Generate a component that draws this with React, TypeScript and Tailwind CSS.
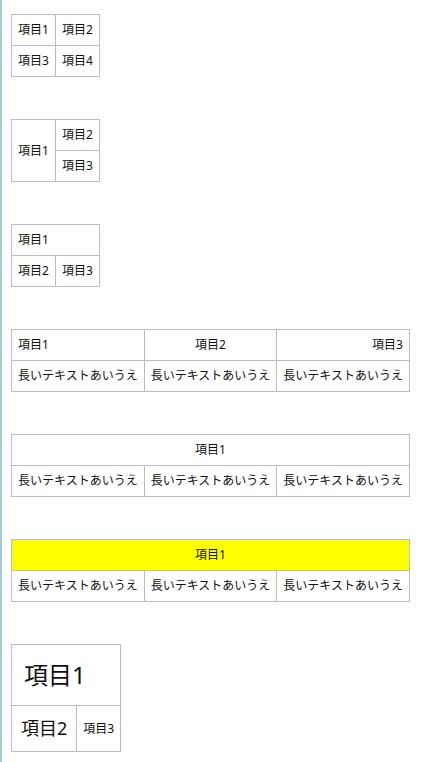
const td = 'border border-[#bdbdbd] p-[0.5em] leading-[1.5] whitespace-nowrap';
const longText = '長いテキストあいうえ';

const App = () => {
  return (
    <div
      className="min-h-[762px] border-l-2 border-[#a7c9d0] bg-white pl-[9px] pt-[14px] text-[12px] text-[#111]"
      style={{ fontFamily: '"Noto Sans", "Noto Sans CJK JP", sans-serif' }}
    >
      <div className="flex flex-col items-start gap-[42px]">
        <table className="border-collapse">
          <tbody>
            <tr>
              <td className={td}>項目1</td>
              <td className={td}>項目2</td>
            </tr>
            <tr>
              <td className={td}>項目3</td>
              <td className={td}>項目4</td>
            </tr>
          </tbody>
        </table>

        <table className="border-collapse">
          <tbody>
            <tr>
              <td className={td} rowSpan={2}>
                項目1
              </td>
              <td className={td}>項目2</td>
            </tr>
            <tr>
              <td className={td}>項目3</td>
            </tr>
          </tbody>
        </table>

        <table className="border-collapse">
          <tbody>
            <tr>
              <td className={td} colSpan={2}>
                項目1
              </td>
            </tr>
            <tr>
              <td className={td}>項目2</td>
              <td className={td}>項目3</td>
            </tr>
          </tbody>
        </table>

        <table className="border-collapse">
          <tbody>
            <tr>
              <td className={`${td} text-left`}>項目1</td>
              <td className={`${td} text-center`}>項目2</td>
              <td className={`${td} text-right`}>項目3</td>
            </tr>
            <tr>
              <td className={td}>{longText}</td>
              <td className={td}>{longText}</td>
              <td className={td}>{longText}</td>
            </tr>
          </tbody>
        </table>

        <table className="border-collapse">
          <tbody>
            <tr>
              <td className={`${td} text-center`} colSpan={3}>
                項目1
              </td>
            </tr>
            <tr>
              <td className={td}>{longText}</td>
              <td className={td}>{longText}</td>
              <td className={td}>{longText}</td>
            </tr>
          </tbody>
        </table>

        <table className="border-collapse">
          <tbody>
            <tr>
              <td className={`${td} bg-[#ffff00] text-center`} colSpan={3}>
                項目1
              </td>
            </tr>
            <tr>
              <td className={td}>{longText}</td>
              <td className={td}>{longText}</td>
              <td className={td}>{longText}</td>
            </tr>
          </tbody>
        </table>

        <table className="border-collapse">
          <tbody>
            <tr>
              <td className={`${td} text-[24px]`} colSpan={2}>
                項目1
              </td>
            </tr>
            <tr>
              <td className={`${td} text-[18px]`}>項目2</td>
              <td className={`${td} text-[12px]`}>項目3</td>
            </tr>
          </tbody>
        </table>
      </div>
    </div>
  );
};

export default App;
